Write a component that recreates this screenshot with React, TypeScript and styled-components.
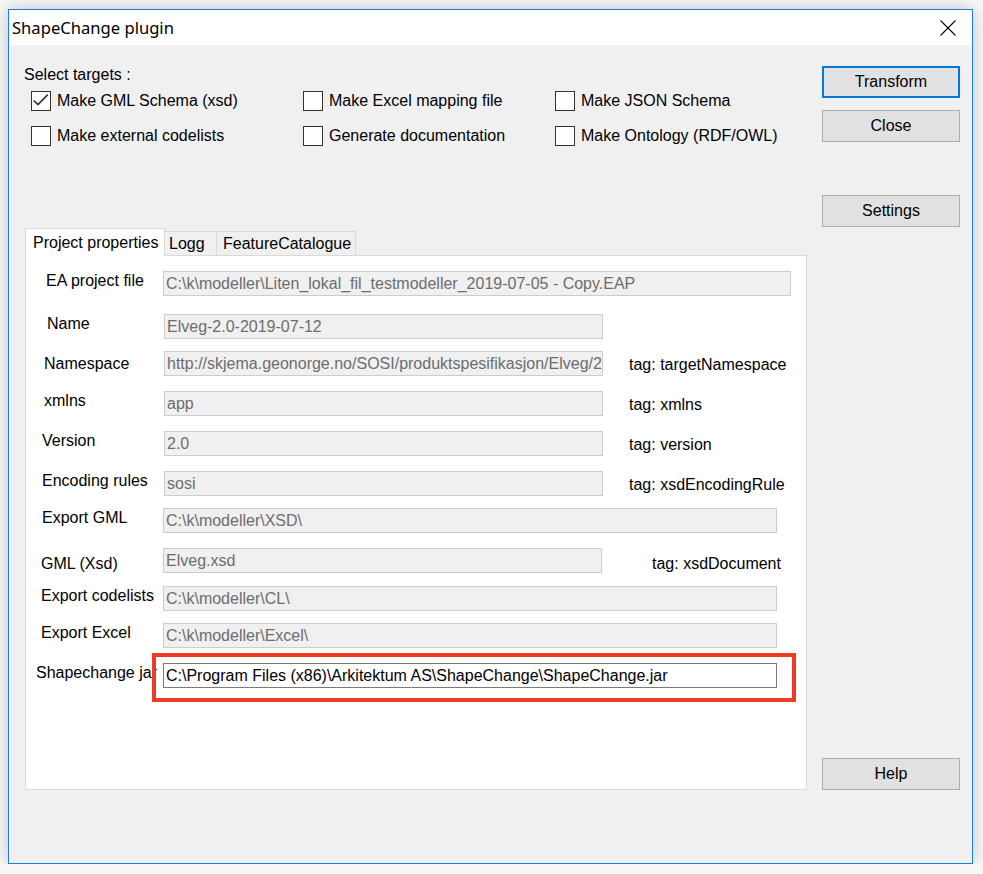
import React from "react";
import styled, { createGlobalStyle } from "styled-components";

const GlobalStyle = createGlobalStyle`
  body {
    margin: 0;
    background: #f8f8f8;
    font-family: "Liberation Sans", Arial, sans-serif;
    font-size: 16px;
    color: #000;
  }
`;

const Page = styled.div`
  padding: 9px 0 0 8px;
`;

const Window = styled.div`
  width: 965px;
  height: 855px;
  box-sizing: border-box;
  border: 1px solid #1a80d6;
  background: #f0f0f0;
  box-shadow: 0 0 16px rgba(0, 0, 0, 0.22);
  display: flex;
  flex-direction: column;
`;

const TitleBar = styled.div`
  height: 35px;
  flex: none;
  background: #fff;
  display: flex;
  align-items: center;
  padding: 0 16px 0 3px;
`;

const Title = styled.div`
  flex: 1;
  font-family: "Noto Sans", "Open Sans", sans-serif;
  font-size: 16.6px;
`;

const Body = styled.div`
  flex: 1;
  display: flex;
  padding-right: 12px;
`;

const Main = styled.div`
  width: 798px;
  box-sizing: border-box;
  padding: 0 0 73px 16px;
  display: flex;
  flex-direction: column;
`;

const SectionLabel = styled.div`
  margin: 21px 0 0 -1px;
  line-height: 18px;
`;

const CheckGrid = styled.div`
  margin: 7px 0 0 6px;
  display: grid;
  grid-template-columns: 272px 252px auto;
  row-gap: 15px;
`;

const CheckItem = styled.label`
  display: flex;
  align-items: center;
  gap: 6px;
  height: 20px;
  white-space: nowrap;
`;

const Box = styled.span`
  width: 20px;
  height: 20px;
  box-sizing: border-box;
  border: 1px solid #333;
  background: #fff;
  display: flex;
  align-items: center;
  justify-content: center;
`;

const TabStrip = styled.div`
  margin-top: 82px;
  height: 27px;
  display: flex;
  align-items: flex-end;
`;

const Tab = styled.div<{ $active?: boolean; $w: number; $pl: number }>`
  width: ${(p) => p.$w}px;
  height: ${(p) => (p.$active ? 28 : 24)}px;
  margin-bottom: ${(p) => (p.$active ? -1 : 0)}px;
  margin-left: -1px;
  &:first-child {
    margin-left: 0;
  }
  box-sizing: border-box;
  border: 1px solid #d9d9d9;
  border-bottom: none;
  background: ${(p) => (p.$active ? "#fff" : "#f0f0f0")};
  position: relative;
  z-index: ${(p) => (p.$active ? 2 : 1)};
  display: flex;
  align-items: center;
  padding-left: ${(p) => p.$pl}px;
  white-space: nowrap;
`;

const Panel = styled.div`
  flex: 1;
  box-sizing: border-box;
  border: 1px solid #d9d9d9;
  background: #fff;
  padding-top: 15px;
  display: flex;
  flex-direction: column;
`;

const Row = styled.div<{ $gap: number }>`
  display: flex;
  align-items: center;
  height: 25px;
  margin-top: ${(p) => p.$gap}px;
  &:first-child {
    margin-top: 0;
  }
`;

const FieldLabel = styled.div<{ $w: number; $x: number; $shift: number }>`
  flex: none;
  width: ${(p) => p.$w}px;
  box-sizing: border-box;
  padding-left: ${(p) => p.$x}px;
  white-space: nowrap;
  margin-top: ${(p) => Math.max(0, p.$shift * 2)}px;
  margin-bottom: ${(p) => Math.max(0, -p.$shift * 2)}px;
`;

const InputWrap = styled.div<{ $marked?: boolean }>`
  position: relative;
  display: flex;
  ${(p) =>
    p.$marked &&
    `
    &::after {
      content: "";
      position: absolute;
      top: -10px;
      right: -19px;
      bottom: -14px;
      left: -11px;
      border: 4px solid #f03b24;
      pointer-events: none;
    }
  `}
`;

const Field = styled.input<{ $w: number; $enabled?: boolean }>`
  width: ${(p) => p.$w}px;
  height: 25px;
  box-sizing: border-box;
  margin: 0;
  padding: 0 0 0 2px;
  border: 1px solid ${(p) => (p.$enabled ? "#7a7a7a" : "#cccccc")};
  background: ${(p) => (p.$enabled ? "#fff" : "#f0f0f0")};
  color: ${(p) => (p.$enabled ? "#000" : "#6d6d6d")};
  font-family: "Liberation Sans", Arial, sans-serif;
  font-size: 16px;
  outline: none;
`;

const Tag = styled.div<{ $ml: number; $shift: number }>`
  margin-left: ${(p) => p.$ml}px;
  white-space: nowrap;
  margin-top: ${(p) => Math.max(0, p.$shift * 2)}px;
  margin-bottom: ${(p) => Math.max(0, -p.$shift * 2)}px;
`;

const Side = styled.div`
  width: 138px;
  margin-left: 15px;
  padding: 21px 0 73px;
  display: flex;
  flex-direction: column;
`;

const Button = styled.button<{ $primary?: boolean; $gap?: number; $bottom?: boolean }>`
  height: 32px;
  width: 100%;
  box-sizing: border-box;
  margin: ${(p) => (p.$bottom ? "auto" : `${p.$gap || 0}px`)} 0 0;
  border: ${(p) => (p.$primary ? "2px solid #0078d7" : "1px solid #adadad")};
  background: #e1e1e1;
  font-family: "Liberation Sans", Arial, sans-serif;
  font-size: 16px;
  color: #000;
  padding: 0;
`;

const targets = [
  { label: "Make GML Schema (xsd)", checked: true },
  { label: "Make Excel mapping file" },
  { label: "Make JSON Schema" },
  { label: "Make external codelists" },
  { label: "Generate documentation" },
  { label: "Make Ontology (RDF/OWL)" },
];

type FieldRow = {
  label: string;
  gap: number;
  x: number;
  shift: number;
  left: number;
  width: number;
  value: string;
  tag?: string;
  tagX?: number;
  tagShift?: number;
  enabled?: boolean;
};

const rows: FieldRow[] = [
  { label: "EA project file", gap: 0, x: 46, shift: -3, left: 163, width: 628, value: "C:\\k\\modeller\\Liten_lokal_fil_testmodeller_2019-07-05 - Copy.EAP" },
  { label: "Name", gap: 18, x: 47, shift: -3, left: 164, width: 439, value: "Elveg-2.0-2019-07-12" },
  { label: "Namespace", gap: 12, x: 44, shift: 0, left: 164, width: 439, value: "http://skjema.geonorge.no/SOSI/produktspesifikasjon/Elveg/2.0", tag: "tag: targetNamespace", tagX: 629, tagShift: 1 },
  { label: "xmlns", gap: 15, x: 44, shift: -3, left: 164, width: 439, value: "app", tag: "tag: xmlns", tagX: 629, tagShift: 1 },
  { label: "Version", gap: 15, x: 42, shift: -3, left: 164, width: 439, value: "2.0", tag: "tag: version", tagX: 629, tagShift: 1 },
  { label: "Encoding rules", gap: 15, x: 42, shift: -3, left: 164, width: 439, value: "sosi", tag: "tag: xsdEncodingRule", tagX: 629, tagShift: 1 },
  { label: "Export GML", gap: 12, x: 42, shift: -3, left: 163, width: 614, value: "C:\\k\\modeller\\XSD\\" },
  { label: "GML (Xsd)", gap: 15, x: 41, shift: 3, left: 163, width: 439, value: "Elveg.xsd", tag: "tag: xsdDocument", tagX: 652, tagShift: 3 },
  { label: "Export codelists", gap: 13, x: 41, shift: -3, left: 163, width: 614, value: "C:\\k\\modeller\\CL\\" },
  { label: "Export Excel", gap: 12, x: 41, shift: -3, left: 163, width: 614, value: "C:\\k\\modeller\\Excel\\" },
  { label: "Shapechange jar", gap: 15, x: 36, shift: -3, left: 163, width: 614, value: "C:\\Program Files (x86)\\Arkitektum AS\\ShapeChange\\ShapeChange.jar", enabled: true },
];

// panel content starts 1px in from the panel border at x=25
const PANEL_X = 26;

const App: React.FC = () => {
  return (
    <Page>
      <GlobalStyle />
      <Window>
        <TitleBar>
          <Title>ShapeChange plugin</Title>
          <svg width="16" height="16" viewBox="0 0 16 16">
            <path d="M0.5 0.5 L15.5 15.5 M15.5 0.5 L0.5 15.5" stroke="#000" strokeWidth="1.1" fill="none" />
          </svg>
        </TitleBar>
        <Body>
          <Main>
            <SectionLabel>Select targets :</SectionLabel>
            <CheckGrid>
              {targets.map((t) => (
                <CheckItem key={t.label}>
                  <Box>
                    {t.checked && (
                      <svg width="18" height="18" viewBox="0 0 18 18">
                        <path d="M1.8 8.6 L6 12.6 L15.8 2.6" stroke="#333" strokeWidth="1.6" fill="none" />
                      </svg>
                    )}
                  </Box>
                  {t.label}
                </CheckItem>
              ))}
            </CheckGrid>
            <TabStrip>
              <Tab $active $w={140} $pl={7}>Project properties</Tab>
              <Tab $w={53} $pl={4}>Logg</Tab>
              <Tab $w={140} $pl={6}>FeatureCatalogue</Tab>
            </TabStrip>
            <Panel>
              {rows.map((r) => (
                <Row key={r.label} $gap={r.gap}>
                  <FieldLabel $w={r.left - PANEL_X} $x={r.x - PANEL_X} $shift={r.shift}>
                    {r.label}
                  </FieldLabel>
                  <InputWrap $marked={r.enabled}>
                    <Field $w={r.width} $enabled={r.enabled} readOnly value={r.value} />
                  </InputWrap>
                  {r.tag && (
                    <Tag $ml={(r.tagX || 0) - (r.left + r.width)} $shift={r.tagShift || 0}>
                      {r.tag}
                    </Tag>
                  )}
                </Row>
              ))}
            </Panel>
          </Main>
          <Side>
            <Button $primary>Transform</Button>
            <Button $gap={12}>Close</Button>
            <Button $gap={53}>Settings</Button>
            <Button $bottom>Help</Button>
          </Side>
        </Body>
      </Window>
    </Page>
  );
};

export default App;
